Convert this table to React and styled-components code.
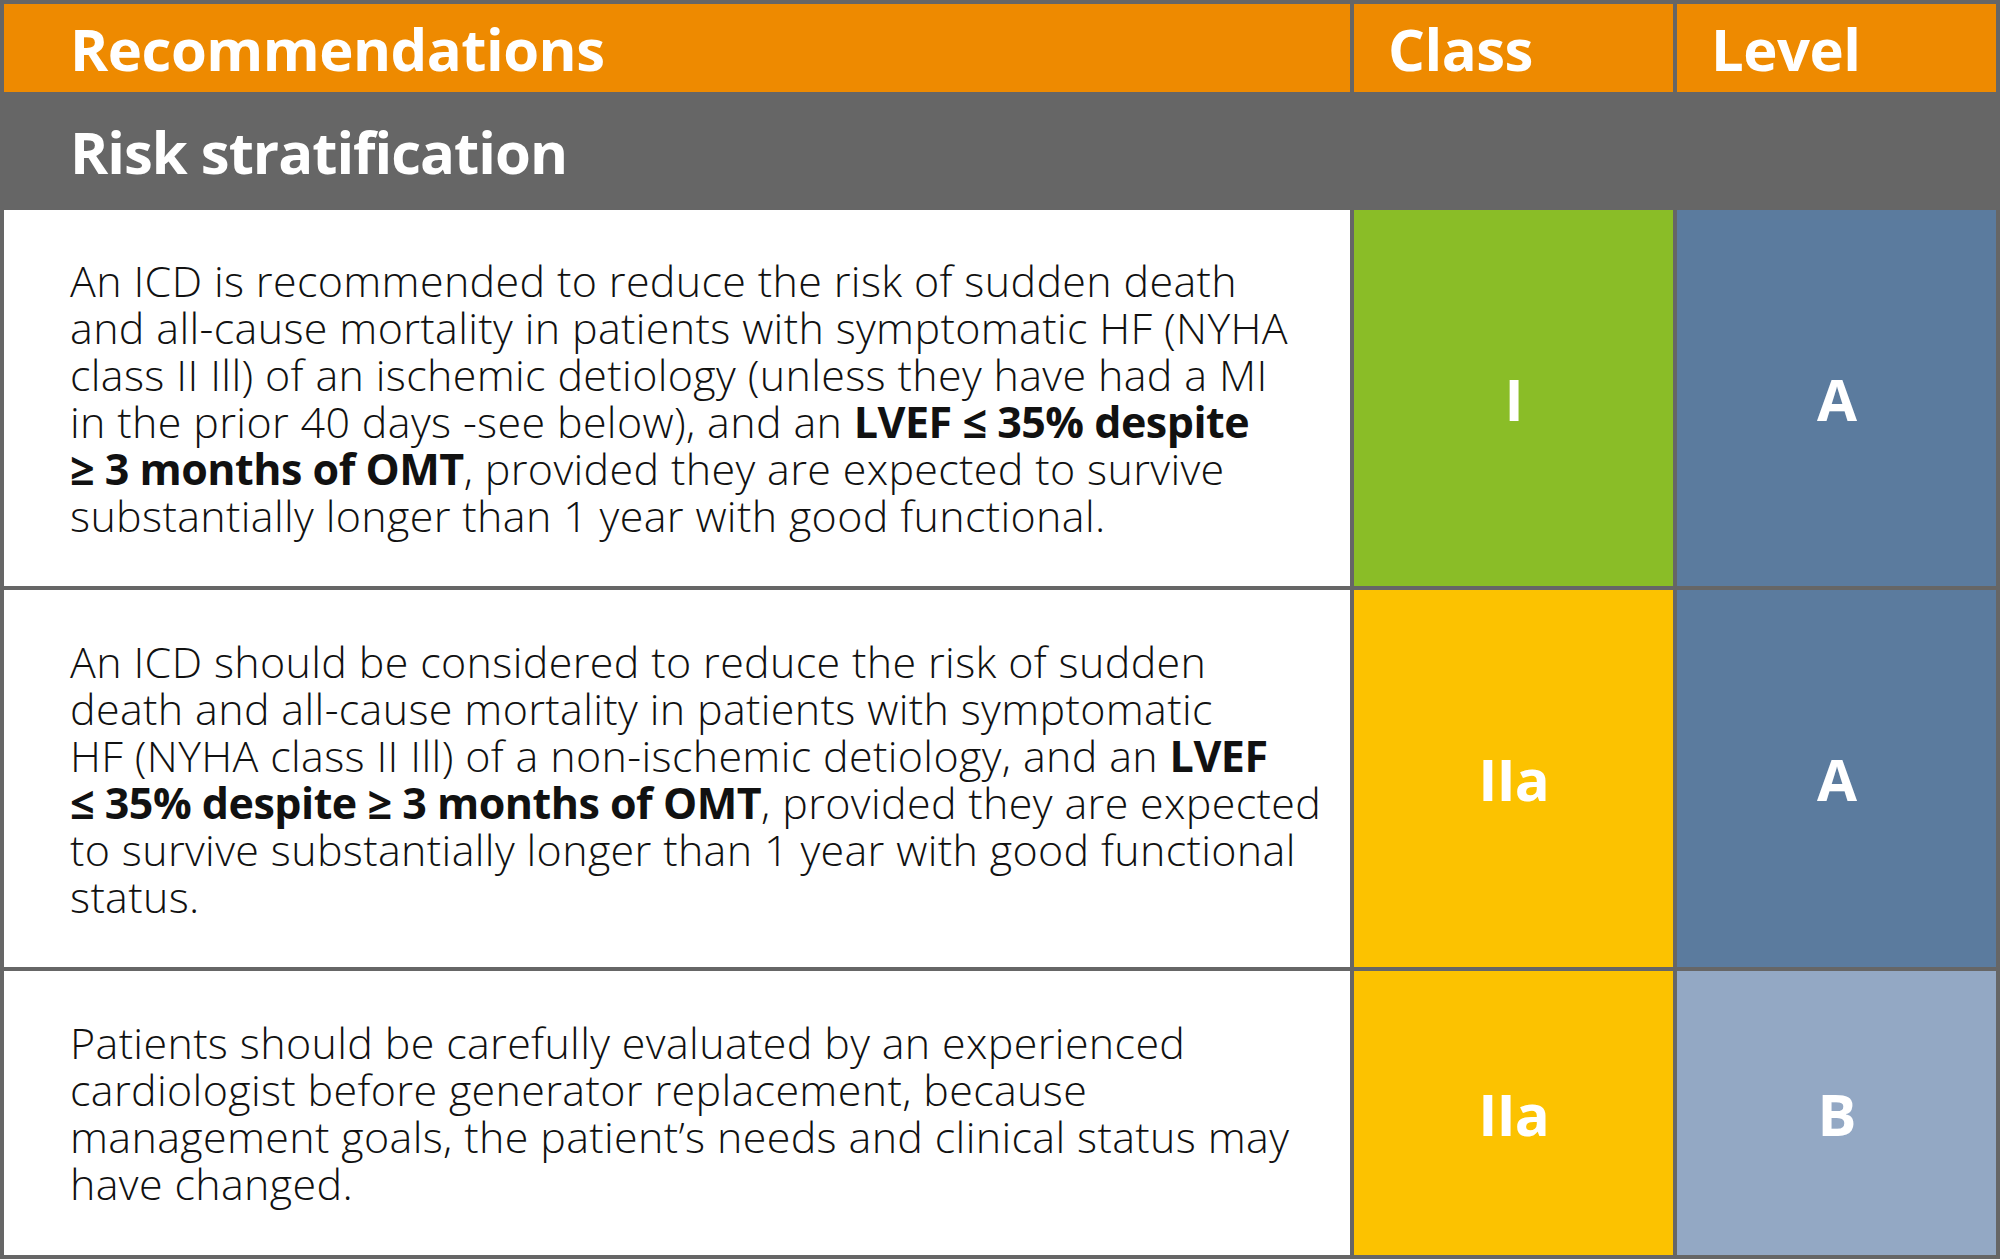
import React from 'react';
import styled, { createGlobalStyle } from 'styled-components';

const GlobalStyle = createGlobalStyle`
  html, body {
    margin: 0;
    padding: 0;
    background: #ffffff;
  }
`;

const colors = {
  border: '#666666',
  orange: '#ee8a00',
  green: '#8abd27',
  yellow: '#fcc200',
  blue: '#5b7b9e',
  paleBlue: '#93a8c4',
};

const Table = styled.div`
  display: grid;
  grid-template-columns: 1346px 319px 319px;
  grid-template-rows: 88px 110px 376px 377px 284px;
  gap: 4px;
  padding: 4px;
  width: 2000px;
  box-sizing: border-box;
  background: ${colors.border};
  font-family: 'Open Sans', 'Liberation Sans', sans-serif;
`;

const HeadCell = styled.div`
  display: flex;
  align-items: center;
  padding-left: ${({ pad }) => pad}px;
  background: ${colors.orange};
  color: #ffffff;
  font-weight: 700;
  font-size: 58px;
  letter-spacing: -0.5px;
`;

const Section = styled.div`
  grid-column: 1 / -1;
  display: flex;
  align-items: center;
  padding-left: 66px;
  color: #ffffff;
  font-weight: 700;
  font-size: 58px;
  letter-spacing: -1px;
`;

const TextCell = styled.div`
  display: flex;
  align-items: center;
  padding-left: 66px;
  background: #ffffff;
  color: #111111;
`;

const Para = styled.p`
  margin: 0;
  font-size: 43px;
  font-weight: 300;
  line-height: 47px;
  white-space: nowrap;
  letter-spacing: 0.35px;

  b {
    font-weight: 700;
    letter-spacing: -0.5px;
  }
`;

const Badge = styled.div`
  display: flex;
  align-items: center;
  justify-content: center;
  background: ${({ bg }) => bg};
  color: #ffffff;
  font-weight: 700;
  font-size: 58px;
  letter-spacing: -1px;
`;

const rows = [
  {
    cls: 'I',
    clsBg: colors.green,
    level: 'A',
    levelBg: colors.blue,
    lines: [
      'An ICD is recommended to reduce the risk of sudden death',
      'and all-cause mortality in patients with symptomatic HF (NYHA',
      'class II Ill) of an ischemic detiology (unless they have had a MI',
      <>in the prior 40 days -see below), and an <b>LVEF ≤ 35% despite</b></>,
      <><b>≥ 3 months of OMT</b>, provided they are expected to survive</>,
      'substantially longer than 1 year with good functional.',
    ],
  },
  {
    cls: 'IIa',
    clsBg: colors.yellow,
    level: 'A',
    levelBg: colors.blue,
    lines: [
      'An ICD should be considered to reduce the risk of sudden',
      'death and all-cause mortality in patients with symptomatic',
      <>HF (NYHA class II Ill) of a non-ischemic detiology, and an <b>LVEF</b></>,
      <><b>≤ 35% despite ≥ 3 months of OMT</b>, provided they are expected</>,
      'to survive substantially longer than 1 year with good functional',
      'status.',
    ],
  },
  {
    cls: 'IIa',
    clsBg: colors.yellow,
    level: 'B',
    levelBg: colors.paleBlue,
    lines: [
      'Patients should be carefully evaluated by an experienced',
      'cardiologist before generator replacement, because',
      'management goals, the patient’s needs and clinical status may',
      'have changed.',
    ],
  },
];

const App = () => (
  <>
    <GlobalStyle />
    <Table>
      <HeadCell pad={66}>Recommendations</HeadCell>
      <HeadCell pad={34}>Class</HeadCell>
      <HeadCell pad={34}>Level</HeadCell>
      <Section>Risk stratification</Section>
      {rows.map((row, i) => (
        <React.Fragment key={i}>
          <TextCell>
            <Para>
              {row.lines.map((line, j) => (
                <React.Fragment key={j}>
                  {line}
                  {j < row.lines.length - 1 && <br />}
                </React.Fragment>
              ))}
            </Para>
          </TextCell>
          <Badge bg={row.clsBg}>{row.cls}</Badge>
          <Badge bg={row.levelBg}>{row.level}</Badge>
        </React.Fragment>
      ))}
    </Table>
  </>
);

export default App;
